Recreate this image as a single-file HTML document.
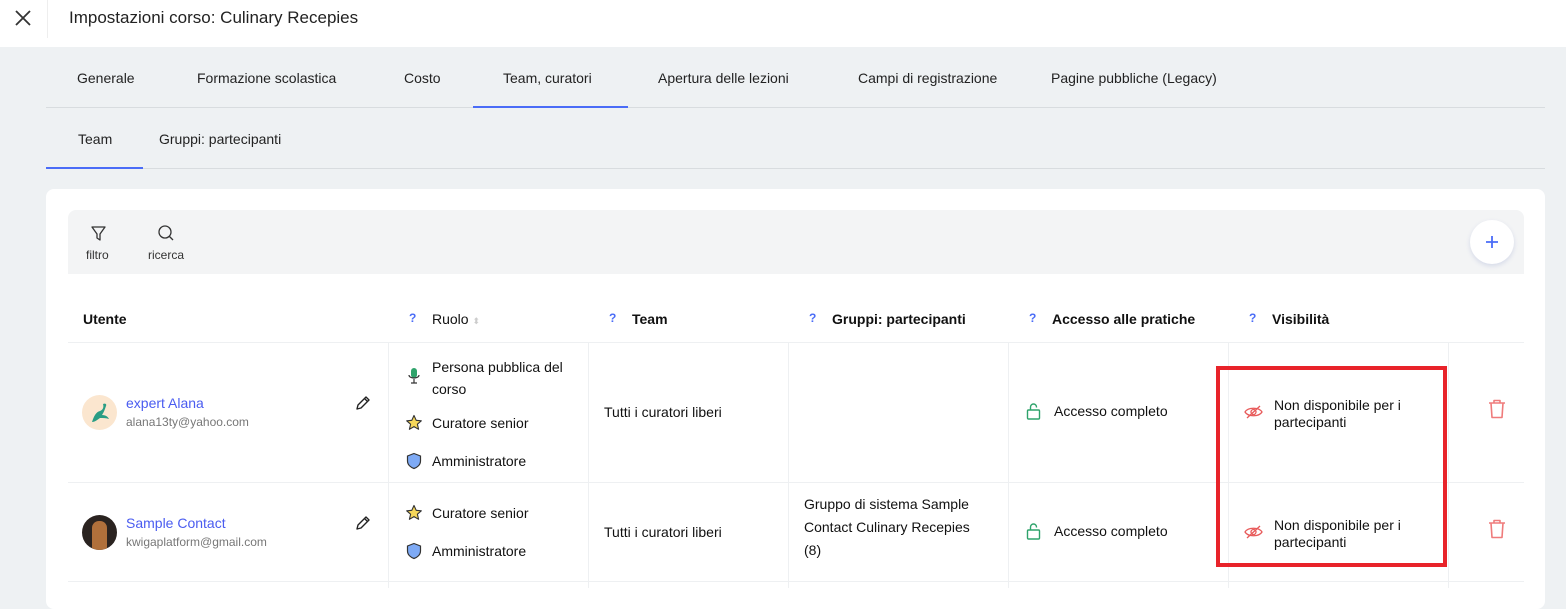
<!DOCTYPE html>
<html><head><meta charset="utf-8"><style>
*{box-sizing:border-box;margin:0;padding:0}
body{width:1566px;height:588px;overflow:hidden;background:#eef1f3;font-family:"Liberation Sans",sans-serif;color:#1a1a1a;position:relative;font-size:14px}
.abs{position:absolute}
.top{left:0;top:0;width:1566px;height:47px;background:#fff}
.tab{top:70px;font-size:14px;color:#222}
.q{color:#4a6cf7;font-size:12px;font-weight:bold}
.th{top:311px;font-size:14px;font-weight:bold;color:#111}
.vl{width:1px;background:#eef0f2}
.hl{height:1px;background:#eef0f2}
.t{font-size:14px;color:#111}
</style></head><body>
<div class="abs top"></div>
<svg class="abs" style="left:14px;top:9px" width="18" height="18" viewBox="0 0 18 18"><path d="M2 2L16 16M16 2L2 16" stroke="#333" stroke-width="1.8"/></svg>
<div class="abs" style="left:47px;top:0;width:1px;height:38px;background:#eee"></div>
<div class="abs" style="left:69px;top:8px;font-size:17px;color:#222">Impostazioni corso: Culinary Recepies</div>

<div class="abs tab" style="left:77px">Generale</div>
<div class="abs tab" style="left:197px">Formazione scolastica</div>
<div class="abs tab" style="left:404px">Costo</div>
<div class="abs tab" style="left:503px">Team, curatori</div>
<div class="abs tab" style="left:658px">Apertura delle lezioni</div>
<div class="abs tab" style="left:858px">Campi di registrazione</div>
<div class="abs tab" style="left:1051px">Pagine pubbliche (Legacy)</div>
<div class="abs" style="left:46px;top:107px;width:1499px;height:1px;background:#d8dcdf"></div>
<div class="abs" style="left:473px;top:106px;width:155px;height:2px;background:#4a6cf7"></div>

<div class="abs tab" style="left:78px;top:131px">Team</div>
<div class="abs tab" style="left:159px;top:131px">Gruppi: partecipanti</div>
<div class="abs" style="left:46px;top:168px;width:1499px;height:1px;background:#d8dcdf"></div>
<div class="abs" style="left:46px;top:167px;width:97px;height:2px;background:#4a6cf7"></div>

<div class="abs" style="left:46px;top:189px;width:1499px;height:420px;background:#fff;border-radius:8px"></div>
<div class="abs" style="left:68px;top:210px;width:1456px;height:64px;background:#f3f4f5;border-radius:8px 8px 0 0"></div>
<svg class="abs" style="left:90px;top:225px" width="17" height="17" viewBox="0 0 17 17"><path d="M2 2H15L10 9V15L7 13V9Z" fill="none" stroke="#333" stroke-width="1.3" stroke-linejoin="round"/></svg>
<div class="abs" style="left:86px;top:248px;font-size:12px;color:#333">filtro</div>
<svg class="abs" style="left:157px;top:224px" width="18" height="18" viewBox="0 0 18 18"><circle cx="8" cy="8" r="6" fill="none" stroke="#333" stroke-width="1.3"/><path d="M12.5 12.5L16 16" stroke="#333" stroke-width="1.3"/></svg>
<div class="abs" style="left:148px;top:248px;font-size:12px;color:#333">ricerca</div>
<div class="abs" style="left:1470px;top:220px;width:44px;height:44px;border-radius:50%;background:#fff;box-shadow:0 2px 5px rgba(80,100,180,.18)"></div>
<svg class="abs" style="left:1485px;top:235px" width="14" height="14" viewBox="0 0 14 14"><path d="M7 1V13M1 7H13" stroke="#4a6cf7" stroke-width="1.8"/></svg>

<div class="abs th" style="left:83px">Utente</div>
<div class="abs q" style="left:409px;top:311px">?</div><div class="abs th" style="left:432px;font-weight:normal">Ruolo <span style="color:#ccc;font-size:9px">⬍</span></div>
<div class="abs q" style="left:609px;top:311px">?</div><div class="abs th" style="left:632px">Team</div>
<div class="abs q" style="left:809px;top:311px">?</div><div class="abs th" style="left:832px">Gruppi: partecipanti</div>
<div class="abs q" style="left:1029px;top:311px">?</div><div class="abs th" style="left:1052px">Accesso alle pratiche</div>
<div class="abs q" style="left:1249px;top:311px">?</div><div class="abs th" style="left:1272px">Visibilità</div>

<div class="abs hl" style="left:68px;top:342px;width:1456px"></div>
<div class="abs hl" style="left:68px;top:482px;width:1456px"></div>
<div class="abs hl" style="left:68px;top:581px;width:1456px"></div>
<div class="abs vl" style="left:388px;top:342px;height:246px"></div>
<div class="abs vl" style="left:588px;top:342px;height:246px"></div>
<div class="abs vl" style="left:788px;top:342px;height:246px"></div>
<div class="abs vl" style="left:1008px;top:342px;height:246px"></div>
<div class="abs vl" style="left:1228px;top:342px;height:246px"></div>
<div class="abs vl" style="left:1448px;top:342px;height:246px"></div>

<!-- row1 -->
<div class="abs" style="left:82px;top:395px;width:35px;height:35px;border-radius:50%;background:#fbe6cf"></div>
<svg class="abs" style="left:86px;top:398px" width="28" height="28" viewBox="0 0 28 28"><path d="M6 24C8 18 10 14 14 13C17 12 18 9 17 6C19 5 21 6 20 8C19 11 18 14 16 17C20 17 22 19 23 21C20 20 17 20 14 20C11 22 9 24 6 24Z" fill="#2a9d84"/></svg>
<div class="abs" style="left:126px;top:395px;color:#4a5cf0;font-size:14px">expert Alana</div>
<div class="abs" style="left:126px;top:415px;color:#777;font-size:12px">alana13ty@yahoo.com</div>
<svg class="abs" style="left:355px;top:395px" width="16" height="16" viewBox="0 0 16 16"><path d="M2 14L3 10L11 2L14 5L6 13Z M9.5 3.5L12.5 6.5" fill="none" stroke="#222" stroke-width="1.4" stroke-linejoin="round"/></svg>

<svg class="abs" style="left:407px;top:367px" width="14" height="18" viewBox="0 0 14 18"><rect x="4" y="1" width="6" height="10" rx="3" fill="#2fa36b"/><path d="M2 8C2 12 12 12 12 8M7 12V16M4 16H10" fill="none" stroke="#333" stroke-width="1.2"/></svg>
<div class="abs t" style="left:432px;top:356px;line-height:22px">Persona pubblica del<br>corso</div>
<svg class="abs" style="left:405px;top:414px" width="18" height="18" viewBox="0 0 18 18"><path d="M9 1.5L11.2 6.3L16.3 6.8L12.4 10.2L13.6 15.3L9 12.6L4.4 15.3L5.6 10.2L1.7 6.8L6.8 6.3Z" fill="#f5d75a" stroke="#333" stroke-width="1.1" stroke-linejoin="round"/></svg>
<div class="abs t" style="left:432px;top:415px">Curatore senior</div>
<svg class="abs" style="left:406px;top:452px" width="16" height="18" viewBox="0 0 16 18"><path d="M8 1.5L14.5 4V9C14.5 13 11 15.5 8 16.5C5 15.5 1.5 13 1.5 9V4Z" fill="#7eaaf5" stroke="#333" stroke-width="1.2"/></svg>
<div class="abs t" style="left:432px;top:453px">Amministratore</div>
<div class="abs t" style="left:604px;top:404px">Tutti i curatori liberi</div>
<svg class="abs" style="left:1026px;top:402px" width="15" height="18" viewBox="0 0 15 18"><rect x="1.5" y="8" width="12" height="9" rx="1" fill="none" stroke="#2fa36b" stroke-width="1.4"/><path d="M4.5 8V5A3 3 0 0 1 10.5 5V5.5" fill="none" stroke="#2fa36b" stroke-width="1.4"/></svg>
<div class="abs t" style="left:1054px;top:403px">Accesso completo</div>
<svg class="abs" style="left:1244px;top:404px" width="19" height="16" viewBox="0 0 19 16"><path d="M1 8C4 3 15 3 18 8C15 13 4 13 1 8Z" fill="none" stroke="#e85a5a" stroke-width="1.3"/><circle cx="9.5" cy="8" r="2.5" fill="none" stroke="#e85a5a" stroke-width="1.3"/><path d="M3 14L16 2" stroke="#e85a5a" stroke-width="1.3"/></svg>
<div class="abs t" style="left:1274px;top:397px;line-height:17px">Non disponibile per i<br>partecipanti</div>
<svg class="abs" style="left:1488px;top:399px" width="18" height="20" viewBox="0 0 18 20"><path d="M1 4H17M6 4V1.5H12V4M3 4L4 18.5H14L15 4" fill="none" stroke="#ef7b7b" stroke-width="1.6" stroke-linejoin="round"/></svg>

<!-- row2 -->
<div class="abs" style="left:82px;top:515px;width:35px;height:35px;border-radius:50%;background:#2a2320;overflow:hidden"><div style="position:absolute;left:10px;top:6px;width:15px;height:29px;border-radius:7px 7px 3px 3px;background:#b0703b"></div></div>
<div class="abs" style="left:126px;top:515px;color:#4a5cf0;font-size:14px">Sample Contact</div>
<div class="abs" style="left:126px;top:535px;color:#777;font-size:12px">kwigaplatform@gmail.com</div>
<svg class="abs" style="left:355px;top:515px" width="16" height="16" viewBox="0 0 16 16"><path d="M2 14L3 10L11 2L14 5L6 13Z M9.5 3.5L12.5 6.5" fill="none" stroke="#222" stroke-width="1.4" stroke-linejoin="round"/></svg>
<svg class="abs" style="left:405px;top:504px" width="18" height="18" viewBox="0 0 18 18"><path d="M9 1.5L11.2 6.3L16.3 6.8L12.4 10.2L13.6 15.3L9 12.6L4.4 15.3L5.6 10.2L1.7 6.8L6.8 6.3Z" fill="#f5d75a" stroke="#333" stroke-width="1.1" stroke-linejoin="round"/></svg>
<div class="abs t" style="left:432px;top:505px">Curatore senior</div>
<svg class="abs" style="left:406px;top:542px" width="16" height="18" viewBox="0 0 16 18"><path d="M8 1.5L14.5 4V9C14.5 13 11 15.5 8 16.5C5 15.5 1.5 13 1.5 9V4Z" fill="#7eaaf5" stroke="#333" stroke-width="1.2"/></svg>
<div class="abs t" style="left:432px;top:543px">Amministratore</div>
<div class="abs t" style="left:604px;top:524px">Tutti i curatori liberi</div>
<div class="abs t" style="left:804px;top:493px;line-height:23px">Gruppo di sistema Sample<br>Contact Culinary Recepies<br>(8)</div>
<svg class="abs" style="left:1026px;top:522px" width="15" height="18" viewBox="0 0 15 18"><rect x="1.5" y="8" width="12" height="9" rx="1" fill="none" stroke="#2fa36b" stroke-width="1.4"/><path d="M4.5 8V5A3 3 0 0 1 10.5 5V5.5" fill="none" stroke="#2fa36b" stroke-width="1.4"/></svg>
<div class="abs t" style="left:1054px;top:523px">Accesso completo</div>
<svg class="abs" style="left:1244px;top:524px" width="19" height="16" viewBox="0 0 19 16"><path d="M1 8C4 3 15 3 18 8C15 13 4 13 1 8Z" fill="none" stroke="#e85a5a" stroke-width="1.3"/><circle cx="9.5" cy="8" r="2.5" fill="none" stroke="#e85a5a" stroke-width="1.3"/><path d="M3 14L16 2" stroke="#e85a5a" stroke-width="1.3"/></svg>
<div class="abs t" style="left:1274px;top:517px;line-height:17px">Non disponibile per i<br>partecipanti</div>
<svg class="abs" style="left:1488px;top:519px" width="18" height="20" viewBox="0 0 18 20"><path d="M1 4H17M6 4V1.5H12V4M3 4L4 18.5H14L15 4" fill="none" stroke="#ef7b7b" stroke-width="1.6" stroke-linejoin="round"/></svg>

<div class="abs" style="left:1216px;top:366px;width:231px;height:201px;border:4px solid #e8232a"></div>
</body></html>
